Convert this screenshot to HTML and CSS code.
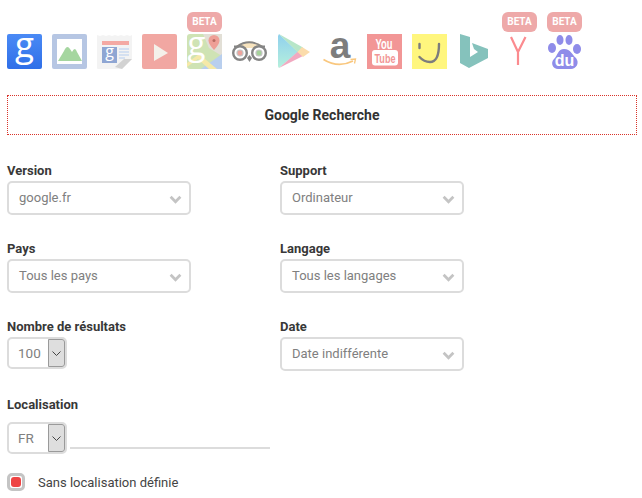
FILE: index.html
```html
<!DOCTYPE html>
<html lang="fr">
<head>
<meta charset="utf-8">
<title>Google Recherche</title>
<link rel="stylesheet" href="styles.css">
</head>
<body>
<div class="engines">
  <div class="engine"><svg viewBox="0 0 35 35" class="icon"><defs><linearGradient id="gb" x1="0" y1="0" x2="0" y2="1"><stop offset="0" stop-color="#4a8af5"/><stop offset="1" stop-color="#2f6fe8"/></linearGradient></defs><rect width="35" height="35" rx="2" fill="url(#gb)"/><text x="17.5" y="22.5" class="g-white" font-size="35">g</text></svg></div>
  <div class="engine"><svg viewBox="0 0 35 35" class="icon"><rect width="35" height="35" rx="2" fill="#b6c6e3"/><rect x="5" y="5" width="25" height="25" fill="#fff"/><path d="M6 27 L12 17 Q15 10 18 15 L20 18 Q23 12 25 18 L30 27Z" fill="#a5d6a0"/></svg></div>
  <div class="engine"><svg viewBox="0 0 35 35" class="icon"><path d="M0 1 l3 1 3-1 3 1 3-1 3 1 3-1 3 1 3-1 3 1 3-1 3 1 2-1 V25 L25 35 H1 Q0 35 0 34Z" fill="#f3f3f3"/><path d="M35 25 L25 35 L18 33 L27 25Z" fill="#d2d2d2"/><rect x="5" y="7" width="27" height="4" fill="#f4a9a3"/><rect x="5" y="13" width="15" height="16" fill="#8fa6d3"/><text x="12.5" y="22.5" class="g-white" font-size="16">g</text><path d="M22 15h10M22 18h10M22 21h10M22 24h6" stroke="#b6cdf0" stroke-width="1.2"/></svg></div>
  <div class="engine"><svg viewBox="0 0 35 35" class="icon"><rect width="35" height="35" rx="2" fill="#f1a7a2"/><path d="M12 10 L26 19 L12 27Z" fill="#f4f1ea"/></svg></div>
  <div class="engine"><span class="beta">BETA</span><svg viewBox="0 0 35 35" class="icon"><rect width="35" height="35" rx="3" fill="#cfe3b4"/><path d="M16 0 H35 V22 L22 14Z" fill="#e2dfd6"/><path d="M14 35 L35 20 V35Z" fill="#b9cfee"/><path d="M0 29 L12 20 L30 35 H22 L11 25 L0 33Z" fill="#f5e9a8"/><text x="9.5" y="21" class="g-white" font-size="33">g</text><path d="M27 1a5.500 5.500 0 0 1 5.500 5.500c0 4-5.500 9.500-5.500 9.500s-5.500-5.500-5.500-9.500a5.500 5.500 0 0 1 5.500-5.500z" fill="#ee9f96"/><circle cx="27" cy="6.500" r="1.500" fill="#b86b62"/></svg></div>
  <div class="engine"><svg viewBox="0 0 35 35" class="icon"><path d="M4 12 Q17 3 31 12 L28 14 H7Z" fill="#f7e3bd"/><path d="M2 12.500 H5 Q17 4 30 12.500 H33" fill="none" stroke="#858585" stroke-width="1.800"/><circle cx="8" cy="19" r="6.800" fill="#fff" stroke="#858585" stroke-width="2.400"/><circle cx="27" cy="19" r="6.800" fill="#fff" stroke="#858585" stroke-width="2.400"/><circle cx="8" cy="19" r="3" fill="#eda39c" stroke="#c4c4c4" stroke-width="1.200"/><circle cx="27" cy="19" r="3" fill="#a5d29a" stroke="#c4c4c4" stroke-width="1.200"/><path d="M15 24 L17.500 28 L20 24 L17.500 21Z" fill="#858585"/></svg></div>
  <div class="engine"><svg viewBox="0 0 35 35" class="icon"><defs><linearGradient id="pl" x1="0" y1="0" x2="0" y2="1"><stop offset="0" stop-color="#8fd0ee"/><stop offset="1" stop-color="#b6f0dc"/></linearGradient></defs><path d="M2 0 L21 18 L2 34 Q1 33 1 32 V2Z" fill="url(#pl)"/><path d="M2 0 L26 13.500 L21 18.500Z" fill="#b7e6c8"/><path d="M2 34 L26 22 L21 17.500Z" fill="#f1a9c0"/><path d="M25 13 L33 18 L26 23 L20.500 18Z" fill="#fbdcab"/></svg></div>
  <div class="engine"><svg viewBox="0 0 35 35" class="icon"><text x="18" y="24" class="amazon" font-size="37">a</text><path d="M1.500 25.500 Q16 34.500 31 27" fill="none" stroke="#f9c77e" stroke-width="1.600"/><path d="M28.500 25.500 L33.500 25 L32.500 29.500" fill="none" stroke="#f9c77e" stroke-width="1.300"/></svg></div>
  <div class="engine"><svg viewBox="0 0 35 35" class="icon"><rect width="35" height="35" fill="#f29696"/><text x="17" y="14.500" class="yt" font-size="14" textLength="17" lengthAdjust="spacingAndGlyphs">You</text><rect x="5" y="16" width="26" height="15.500" rx="3" fill="#fff"/><text x="18" y="28.500" class="yt-red" font-size="13" textLength="21" lengthAdjust="spacingAndGlyphs">Tube</text></svg></div>
  <div class="engine"><svg viewBox="0 0 35 35" class="icon"><rect width="35" height="35" fill="#fff67e"/><path d="M7.500 10 V14 M7.500 23 Q12 28 18 28 Q27 28 27 10" fill="none" stroke="#7d7d7d" stroke-width="2.400" stroke-linecap="round"/></svg></div>
  <div class="engine"><svg viewBox="0 0 35 35" class="icon"><path d="M3 0 L13 3 V23 L21 18 L17 15 L15 9 L31 15 V24 L12 34 L3 29Z" fill="#85c2bc"/></svg></div>
  <div class="engine"><span class="beta">BETA</span><svg viewBox="0 0 35 35" class="icon"><path d="M9 3 L16 18 V31 M23.500 3 L16 18" fill="none" stroke="#fb8b8f" stroke-width="2.200"/></svg></div>
  <div class="engine"><span class="beta">BETA</span><svg viewBox="0 0 35 35" class="icon"><ellipse cx="5" cy="14" rx="4" ry="5" fill="#8f8ce9"/><ellipse cx="13" cy="6" rx="3.500" ry="5" fill="#8f8ce9"/><ellipse cx="22" cy="6" rx="3.500" ry="5" fill="#8f8ce9"/><ellipse cx="30" cy="15" rx="4" ry="5" fill="#8f8ce9"/><path d="M17 15 C24 15 25 21 29 24 C33 29 29 35 24 35 H11 C6 35 3 29 7 25 C11 21 11 15 17 15Z" fill="#8f8ce9"/><text x="17.500" y="31.500" class="du" font-size="16">du</text></svg></div>
</div>

<div class="title-box">Google Recherche</div>

<div class="form">
  <div class="field">
    <div class="label">Version</div>
    <div class="select"><span class="select-text">google.fr</span><svg viewBox="0 0 12 8" class="chev"><path d="M1.500 1.500 L6 6 L10.500 1.500" /></svg></div>
  </div>
  <div class="field">
    <div class="label">Support</div>
    <div class="select"><span class="select-text">Ordinateur</span><svg viewBox="0 0 12 8" class="chev"><path d="M1.500 1.500 L6 6 L10.500 1.500" /></svg></div>
  </div>
  <div class="field">
    <div class="label">Pays</div>
    <div class="select"><span class="select-text">Tous les pays</span><svg viewBox="0 0 12 8" class="chev"><path d="M1.500 1.500 L6 6 L10.500 1.500" /></svg></div>
  </div>
  <div class="field">
    <div class="label">Langage</div>
    <div class="select"><span class="select-text">Tous les langages</span><svg viewBox="0 0 12 8" class="chev"><path d="M1.500 1.500 L6 6 L10.500 1.500" /></svg></div>
  </div>
  <div class="field">
    <div class="label">Nombre de résultats</div>
    <div class="mini mini-num"><span class="mini-val">100</span><span class="mini-btn"><svg viewBox="0 0 9 5" class="mini-chev"><path d="M0.500 0.500 L4.500 4.500 L8.500 0.500"/></svg></span></div>
  </div>
  <div class="field">
    <div class="label">Date</div>
    <div class="select"><span class="select-text">Date indifférente</span><svg viewBox="0 0 12 8" class="chev"><path d="M1.500 1.500 L6 6 L10.500 1.500" /></svg></div>
  </div>
</div>

<div class="loc">
  <div class="label loc-label">Localisation</div>
  <div class="loc-row">
    <div class="mini mini-fr"><span class="mini-val">FR</span><span class="mini-btn"><svg viewBox="0 0 9 5" class="mini-chev"><path d="M0.500 0.500 L4.500 4.500 L8.500 0.500"/></svg></span></div>
    <div class="line"></div>
  </div>
  <div class="check-row">
    <span class="check"><span class="check-dot"></span></span>
    <span class="check-text">Sans localisation définie</span>
  </div>
</div>
</body>
</html>
```
FILE: styles.css
```css
* { box-sizing: border-box; }
html, body { height: 498px; overflow: hidden; }
body {
  margin: 0;
  background: #fff;
  font-family: Roboto, "Liberation Sans", sans-serif;
  color: #333;
}
.engines {
  display: flex;
  gap: 10px;
  padding: 12px 0 0 7px;
  height: 95px;
}
.engine {
  position: relative;
  width: 35px;
  height: 57px;
  display: flex;
  align-items: flex-end;
}
.icon { width: 35px; height: 35px; display: block; overflow: visible; }
.beta {
  position: absolute;
  top: 0;
  left: 0;
  z-index: 1;
  width: 35px;
  height: 20px;
  border-radius: 6px;
  background: #eea9a9;
  color: #fff;
  font-size: 10px;
  font-weight: 700;
  line-height: 20px;
  text-align: center;
}
.g-white {
  font-family: "Open Sans", sans-serif;
  fill: #fff;
  text-anchor: middle;
  font-weight: 400;
}
.amazon {
  font-family: "Liberation Sans", sans-serif;
  font-weight: 700;
  fill: #7d7d7d;
  text-anchor: middle;
}
.yt, .yt-red, .du {
  font-family: "Liberation Sans", sans-serif;
  font-weight: 700;
  text-anchor: middle;
}
.yt, .du { fill: #fff; }
.yt-red { fill: #f29696; }
.title-box {
  margin: 0 5px 0 7px;
  height: 40px;
  border: 1px dotted #d9342b;
  font-size: 14px;
  font-weight: 700;
  line-height: 38px;
  text-align: center;
  color: #333;
}
.form {
  display: grid;
  grid-template-columns: 273px 184px;
  grid-auto-rows: 78px;
  padding: 28px 0 0 7px;
}
.label {
  font-size: 13px;
  font-weight: 700;
  line-height: 16px;
  height: 18px;
  color: #383838;
}
.select {
  width: 184px;
  height: 34px;
  border: 2px solid #dcdcdc;
  border-radius: 5px;
  padding: 0 10px;
  display: flex;
  align-items: center;
  justify-content: space-between;
  font-size: 13px;
  color: #808080;
  background: #fff;
}
.select-text { margin-top: -2px; }
.chev {
  width: 13px;
  height: 9px;
  margin: 2px -3px 0 0;
  flex: none;
}
.chev path { fill: none; stroke: #c4c4c4; stroke-width: 2.6; }
.mini {
  height: 32px;
  border: 2px solid #dcdcdc;
  border-radius: 5px;
  display: flex;
  font-size: 13.5px;
  color: #808080;
  background: #fff;
}
.mini-num { width: 60px; }
.mini-fr { width: 60px; flex: none; }
.mini-val {
  flex: 1;
  padding-left: 9px;
  line-height: 28px;
}
.mini-btn {
  width: 17px;
  background: #dedede;
  border: 1px solid #9a9a9a;
  border-radius: 0 3px 3px 0;
  display: flex;
  align-items: center;
  justify-content: center;
}
.mini-chev { width: 9px; height: 5px; }
.mini-chev path { fill: none; stroke: #444; stroke-width: 1; }
.loc { padding: 0 0 0 7px; }
.loc-label { height: 25px; }
.loc-row { display: flex; align-items: flex-end; gap: 3px; }
.line { width: 200px; height: 2px; background: #dcdcdc; margin-bottom: 5px; }
.check-row {
  display: flex;
  align-items: center;
  margin-top: 19px;
  font-size: 13px;
  color: #444;
}
.check {
  width: 18px;
  height: 18px;
  border: 3px solid #c4c4c4;
  border-radius: 5px;
  background: #fff;
  padding: 1px;
  flex: none;
}
.check-dot { display: block; width: 100%; height: 100%; background: #ee4444; border-radius: 3px; }
.check-text { margin-left: 13px; }
```
